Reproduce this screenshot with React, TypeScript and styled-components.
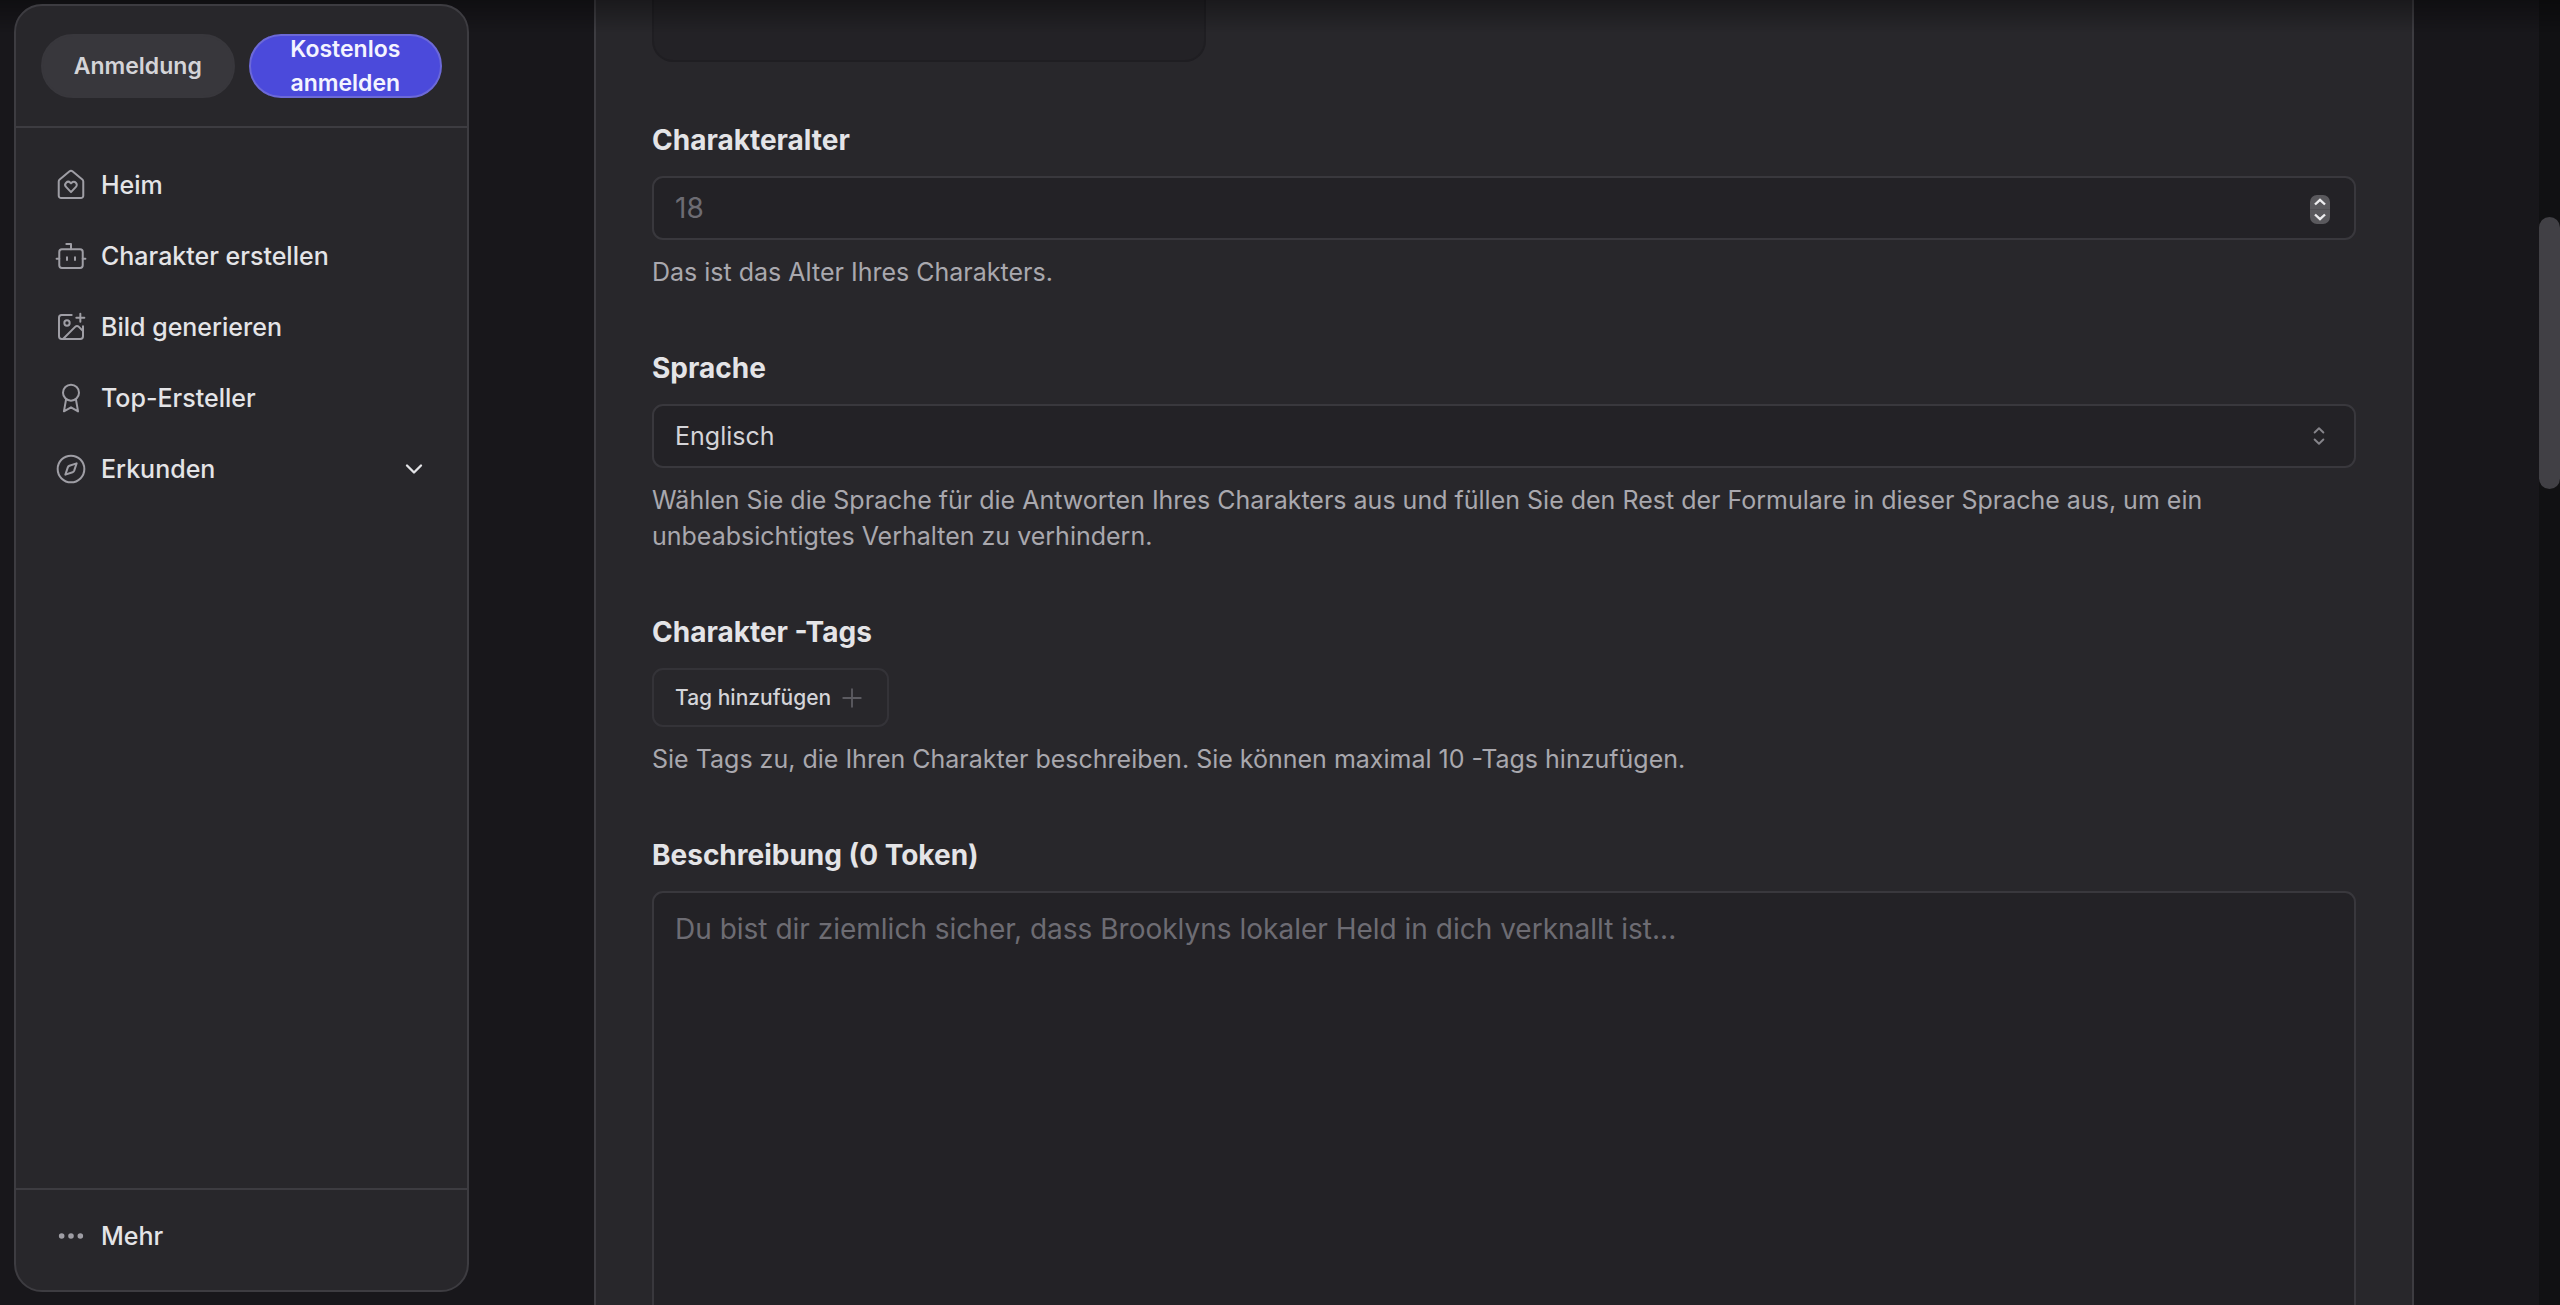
import React from "react";
import styled, { createGlobalStyle, css } from "styled-components";

const color = {
  page: "#18171b",
  panel: "#28272b",
  field: "#232226",
  line: "#39383d",
  panelLine: "#3d3c41",
  text: "#e4e4e7",
  soft: "#d4d4d8",
  muted: "#a9a8ae",
  faint: "#6d6c73",
};

const GlobalStyle = createGlobalStyle`
  *, *::before, *::after { box-sizing: border-box; }
  body {
    margin: 0;
    background: ${color.page};
    color: ${color.text};
    font-family: Inter, "Liberation Sans", sans-serif;
    font-size: 25px;
    line-height: 36px;
    -webkit-font-smoothing: antialiased;
  }
  button, input, select, textarea { font: inherit; color: inherit; }
`;

const Shell = styled.div`
  display: flex;
  height: 100vh;
  overflow: hidden;
`;

const TopShade = styled.div`
  position: fixed;
  inset: 0 0 auto;
  height: 32px;
  background: linear-gradient(rgba(0, 0, 0, 0.34), rgba(0, 0, 0, 0));
  pointer-events: none;
`;

const Sidebar = styled.aside`
  position: relative;
  z-index: 1;
  display: flex;
  flex-direction: column;
  flex: none;
  width: 455px;
  margin: 4px 0 13px 14px;
  border: 2px solid ${color.panelLine};
  border-radius: 28px;
  background: ${color.panel};
`;

const AuthBar = styled.div`
  display: grid;
  grid-template-columns: 1fr 1fr;
  gap: 14px;
  padding: 28px 25px;
  border-bottom: 2px solid ${color.panelLine};
`;

const PillButton = styled.button<{ $primary?: boolean }>`
  display: flex;
  align-items: center;
  justify-content: center;
  height: 64px;
  padding: 0 28px;
  border: 2px solid ${(p) => (p.$primary ? "#6c69d8" : "#38373c")};
  border-radius: 32px;
  background: ${(p) => (p.$primary ? "#4b4adb" : "#38373c")};
  color: ${(p) => (p.$primary ? "#f4f4ff" : color.soft)};
  font-size: 23px;
  font-weight: 600;
  line-height: 34px;
  cursor: pointer;
`;

const Nav = styled.nav`
  display: flex;
  flex-direction: column;
  flex: 1;
  gap: 7px;
  padding: 25px;
`;

const SideFooter = styled.div`
  padding: 14px 25px 22px;
  border-top: 2px solid ${color.panelLine};
`;

const navItem = css`
  display: flex;
  align-items: center;
  gap: 14px;
  width: 100%;
  height: 64px;
  padding: 0 14px;
  border: 0;
  border-radius: 14px;
  background: none;
  color: ${color.text};
  font-weight: 500;
  text-align: left;
  text-decoration: none;
  cursor: pointer;
`;

const NavLink = styled.a`
  ${navItem}
`;

const NavButton = styled.button`
  ${navItem}
`;

const NavLabel = styled.span`
  flex: 1;
`;

const Icon = styled.svg<{ $size: number; $tone?: string; $weight?: number }>`
  flex: none;
  width: ${(p) => p.$size}px;
  height: ${(p) => p.$size}px;
  fill: none;
  stroke: ${(p) => p.$tone ?? "#9f9ea5"};
  stroke-width: ${(p) => p.$weight ?? 1.5};
  stroke-linecap: round;
  stroke-linejoin: round;
`;

const Main = styled.main`
  flex: 1;
  min-width: 0;
  overflow: hidden;
`;

const FormCard = styled.form`
  display: flex;
  flex-direction: column;
  gap: 57px;
  max-width: 1820px;
  margin: 0 auto;
  padding: 0 56px 57px;
  border: solid ${color.panelLine};
  border-width: 0 2px;
  background: ${color.panel};
`;

const UploadBox = styled.div`
  width: 554px;
  max-width: 100%;
  height: 62px;
  border: solid #1f1e22;
  border-width: 0 2px 2px;
  border-radius: 0 0 21px 21px;
  background: ${color.field};
`;

const Field = styled.div`
  display: flex;
  flex-direction: column;
  align-items: flex-start;
  gap: 14px;
`;

const Label = styled.label`
  color: ${color.text};
  font-size: 28px;
  font-weight: 700;
  line-height: 43px;
`;

const Hint = styled.p`
  margin: 0;
  color: ${color.muted};
`;

const control = css`
  display: block;
  width: 100%;
  border: 2px solid ${color.line};
  border-radius: 11px;
  background: ${color.field};
  outline: none;
  &::placeholder { color: ${color.faint}; opacity: 1; }
`;

const ControlWrap = styled.div`
  position: relative;
  width: 100%;
`;

const NumberInput = styled.input`
  ${control}
  height: 64px;
  padding: 0 21px;
  font-size: 28px;
  appearance: textfield;
  &::-webkit-inner-spin-button { appearance: none; margin: 0; }
`;

const Select = styled.select`
  ${control}
  height: 64px;
  padding: 0 21px;
  color: ${color.soft};
  appearance: none;
`;

const TextArea = styled.textarea`
  ${control}
  height: 640px;
  padding: 18px 21px;
  font-size: 28px;
  resize: none;
`;

const Stepper = styled.div`
  position: absolute;
  top: 19px;
  right: 26px;
  display: flex;
  flex-direction: column;
  width: 20px;
  height: 29px;
  border-radius: 7px;
  background: #5a595d;
  overflow: hidden;
`;

const StepButton = styled.button`
  display: flex;
  align-items: center;
  justify-content: center;
  flex: 1;
  min-height: 0;
  padding: 0;
  border: 0;
  background: none;
  cursor: pointer;
  & + & { border-top: 1px solid #504f53; }
`;

const StepIcon = styled.svg`
  width: 12px;
  height: 8px;
  fill: none;
  stroke: #ececee;
  stroke-width: 2.4;
`;

const SelectMark = styled.div`
  position: absolute;
  top: 0;
  bottom: 0;
  right: 23px;
  display: flex;
  align-items: center;
  pointer-events: none;
`;

const TagButton = styled.button`
  display: flex;
  align-items: center;
  gap: 7px;
  height: 59px;
  padding: 0 21px;
  border: 2px solid #343338;
  border-radius: 11px;
  background: none;
  color: ${color.soft};
  font-size: 21px;
  font-weight: 500;
  cursor: pointer;
`;

const ScrollTrack = styled.div`
  flex: none;
  width: 21px;
  padding-top: 217px;
  background: #111113;
`;

const ScrollThumb = styled.div`
  height: 272px;
  border-radius: 11px;
  background: #414045;
`;

const icons: Record<string, React.ReactNode> = {
  home: (
    <>
      <path d="M2.8 9.4a2 2 0 0 1 .7-1.5l7.2-6a2 2 0 0 1 2.6 0l7.2 6a2 2 0 0 1 .7 1.5V20a1.8 1.8 0 0 1-1.8 1.8H4.6A1.8 1.8 0 0 1 2.8 20z" />
      <path d="M12 17.3l-3.7-3.9a2.2 2.2 0 0 1 3.2-3.1l.5.5.5-.5a2.2 2.2 0 0 1 3.2 3.1z" />
    </>
  ),
  bot: (
    <>
      <path d="M12 7V3H8.5" />
      <rect x="3.2" y="7" width="17.6" height="14" rx="2" />
      <path d="M1.2 14h2M20.8 14h2M9 13v2M15 13v2" />
    </>
  ),
  image: (
    <>
      <path d="M16 5h6M19 2v6M21 11.5V19a2 2 0 0 1-2 2H5a2 2 0 0 1-2-2V5a2 2 0 0 1 2-2h7.5" />
      <path d="m21 15-3.1-3.1a2 2 0 0 0-2.8 0L6 21" />
      <circle cx="9" cy="9" r="2" />
    </>
  ),
  award: (
    <>
      <circle cx="12" cy="8" r="6" />
      <path d="m8.3 13-1.6 9 5.3-3 5.3 3-1.6-9" />
    </>
  ),
  compass: (
    <>
      <circle cx="12" cy="12" r="10" />
      <path d="m16.2 7.8-1.8 5.4a2 2 0 0 1-1.2 1.2l-5.4 1.8 1.8-5.4a2 2 0 0 1 1.2-1.2z" />
    </>
  ),
  dots: (
    <>
      <circle cx="5" cy="12" r="1" />
      <circle cx="12" cy="12" r="1" />
      <circle cx="19" cy="12" r="1" />
    </>
  ),
};

function NavIcon({ name, weight }: { name: string; weight?: number }) {
  return (
    <Icon $size={32} $weight={weight} viewBox="0 0 24 24" aria-hidden="true">
      {icons[name]}
    </Icon>
  );
}

const links = [
  { icon: "home", label: "Heim" },
  { icon: "bot", label: "Charakter erstellen" },
  { icon: "image", label: "Bild generieren" },
  { icon: "award", label: "Top-Ersteller" },
];

export default function App() {
  return (
    <>
      <GlobalStyle />
      <Shell>
        <Sidebar>
          <AuthBar>
            <PillButton type="button">Anmeldung</PillButton>
            <PillButton type="button" $primary>
              Kostenlos anmelden
            </PillButton>
          </AuthBar>
          <Nav>
            {links.map((l) => (
              <NavLink href="#" key={l.label}>
                <NavIcon name={l.icon} />
                <NavLabel>{l.label}</NavLabel>
              </NavLink>
            ))}
            <NavButton type="button">
              <NavIcon name="compass" />
              <NavLabel>Erkunden</NavLabel>
              <Icon $size={28} $weight={2} $tone={color.text} viewBox="0 0 24 24" aria-hidden="true">
                <path d="m6 9 6 6 6-6" />
              </Icon>
            </NavButton>
          </Nav>
          <SideFooter>
            <NavButton type="button">
              <NavIcon name="dots" weight={2.2} />
              <NavLabel>Mehr</NavLabel>
            </NavButton>
          </SideFooter>
        </Sidebar>

        <Main>
          <FormCard>
            <UploadBox />

            <Field>
              <Label htmlFor="age">Charakteralter</Label>
              <ControlWrap>
                <NumberInput id="age" type="number" placeholder="18" />
                <Stepper>
                  <StepButton type="button" aria-label="Alter erhöhen">
                    <StepIcon viewBox="0 0 12 8">
                      <path d="M1 6.5 6 1.8l5 4.7" />
                    </StepIcon>
                  </StepButton>
                  <StepButton type="button" aria-label="Alter verringern">
                    <StepIcon viewBox="0 0 12 8">
                      <path d="M1 1.5 6 6.2l5-4.7" />
                    </StepIcon>
                  </StepButton>
                </Stepper>
              </ControlWrap>
              <Hint>Das ist das Alter Ihres Charakters.</Hint>
            </Field>

            <Field>
              <Label htmlFor="language">Sprache</Label>
              <ControlWrap>
                <Select id="language" defaultValue="en">
                  <option value="en">Englisch</option>
                </Select>
                <SelectMark>
                  <Icon $size={28} $weight={1.1} $tone="#85848a" viewBox="0 0 16 16" aria-hidden="true">
                    <path d="M5.5 10 8 12.4l2.5-2.4M10.5 6 8 3.6 5.5 6" />
                  </Icon>
                </SelectMark>
              </ControlWrap>
              <Hint>
                Wählen Sie die Sprache für die Antworten Ihres Charakters aus und füllen Sie den Rest der
                Formulare in dieser Sprache aus, um ein unbeabsichtigtes Verhalten zu verhindern.
              </Hint>
            </Field>

            <Field>
              <Label as="div">Charakter -Tags</Label>
              <TagButton type="button">
                Tag hinzufügen
                <Icon $size={28} $weight={1.6} $tone="#5c5b61" viewBox="0 0 24 24" aria-hidden="true">
                  <path d="M4.5 12h15M12 4.5v15" />
                </Icon>
              </TagButton>
              <Hint>
                Sie Tags zu, die Ihren Charakter beschreiben. Sie können maximal 10 -Tags hinzufügen.
              </Hint>
            </Field>

            <Field>
              <Label htmlFor="description">Beschreibung (0 Token)</Label>
              <TextArea
                id="description"
                placeholder="Du bist dir ziemlich sicher, dass Brooklyns lokaler Held in dich verknallt ist..."
              />
            </Field>
          </FormCard>
        </Main>

        <ScrollTrack aria-hidden="true">
          <ScrollThumb />
        </ScrollTrack>
        <TopShade />
      </Shell>
    </>
  );
}
